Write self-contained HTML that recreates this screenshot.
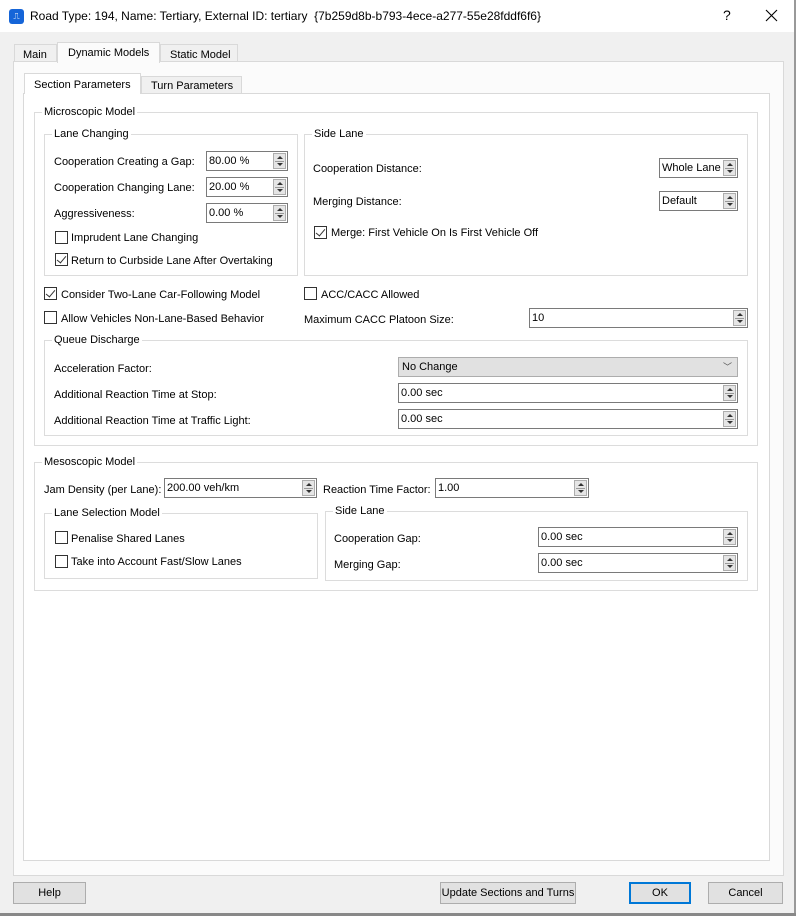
<!DOCTYPE html><html><head><style>
*{box-sizing:border-box;margin:0;padding:0}
body{width:796px;height:916px;background:#f0f0f0;font:11px "Liberation Sans",sans-serif;color:#000;position:relative;overflow:hidden}
.a{position:absolute}
.t{position:absolute;white-space:nowrap;line-height:14px}
.box{position:absolute;border:1px solid #dcdcdc}
.gt{position:absolute;top:-8px;left:7px;background:#fff;padding:0 2px;line-height:14px;white-space:nowrap}
.sp{position:absolute;border:1px solid #7a7a7a;background:#fff;height:20px;line-height:19px;padding-left:2px;white-space:nowrap}
.sp i{position:absolute;right:1px;top:1px;width:13px;height:16px;border:1px solid #adadad;background:#e5e5e5}
.sp i:before{content:"";position:absolute;left:3px;top:2px;border:3px solid transparent;border-bottom:3px solid #333;border-top:0}
.sp i:after{content:"";position:absolute;left:3px;top:9px;border:3px solid transparent;border-top:3px solid #333;border-bottom:0}
.sp i b{position:absolute;left:1px;right:1px;top:7px;height:1px;background:#999}
.cb{position:absolute;width:13px;height:13px;border:1px solid #333;background:#fff}
.cb.c:after{content:"";position:absolute;left:3px;top:0px;width:4px;height:8px;border:solid #333;border-width:0 1.3px 1.3px 0;transform:rotate(40deg)}
.btn{position:absolute;height:22px;border:1px solid #adadad;background:#e1e1e1;text-align:center;line-height:20px}
</style></head><body>
<div class="a" style="left:0;top:0;width:796px;height:32px;background:#fff"></div>
<div class="a" style="left:9px;top:9px;width:15px;height:15px;background:#1565d8;border-radius:3px;color:#fff;font-size:9px;text-align:center;line-height:14px">⎍</div>
<div class="t" style="left:30px;top:9px;font-size:12px">Road Type: 194, Name: Tertiary, External ID: tertiary &nbsp;{7b259d8b-b793-4ece-a277-55e28fddf6f6}</div>
<div class="t" style="left:723px;top:8px;font-size:14px">?</div>
<svg class="a" style="left:765px;top:9px" width="13" height="13"><path d="M1 1L12 12M12 1L1 12" stroke="#000" stroke-width="1.1"/></svg>
<div class="a" style="right:0;top:0;width:2px;height:916px;background:#999"></div>
<div class="a" style="left:14px;top:44px;width:43px;height:18px;border:1px solid #d9d9d9;background:#f0f0f0"></div><div class="t" style="left:23px;top:48px">Main</div>
<div class="a" style="left:160px;top:44px;width:78px;height:18px;border:1px solid #d9d9d9;background:#f0f0f0"></div><div class="t" style="left:170px;top:48px">Static Model</div>
<div class="a" style="left:13px;top:61px;width:771px;height:815px;border:1px solid #d9d9d9;background:#fbfbfb"></div>
<div class="a" style="left:57px;top:42px;width:103px;height:21px;border:1px solid #d9d9d9;border-bottom:0;background:#fbfbfb"></div><div class="t" style="left:68px;top:46px">Dynamic Models</div>
<div class="a" style="left:141px;top:76px;width:101px;height:18px;border:1px solid #d9d9d9;background:#f0f0f0"></div><div class="t" style="left:151px;top:79px">Turn Parameters</div>
<div class="a" style="left:23px;top:93px;width:747px;height:768px;border:1px solid #d9d9d9;background:#fff"></div>
<div class="a" style="left:24px;top:73px;width:117px;height:21px;border:1px solid #d9d9d9;border-bottom:0;background:#fff"></div><div class="t" style="left:34px;top:78px">Section Parameters</div>
<div class="box" style="left:34px;top:112px;width:724px;height:334px"><span class="gt">Microscopic Model</span></div>
<div class="box" style="left:44px;top:134px;width:254px;height:142px"><span class="gt">Lane Changing</span></div>
<div class="t" style="left:54px;top:155px">Cooperation Creating a Gap:</div><div class="sp" style="left:206px;top:151px;width:82px">80.00 %<i><b></b></i></div>
<div class="t" style="left:54px;top:181px">Cooperation Changing Lane:</div><div class="sp" style="left:206px;top:177px;width:82px">20.00 %<i><b></b></i></div>
<div class="t" style="left:54px;top:207px">Aggressiveness:</div><div class="sp" style="left:206px;top:203px;width:82px">0.00 %<i><b></b></i></div>
<div class="cb" style="left:55px;top:231px"></div><div class="t" style="left:71px;top:231px">Imprudent Lane Changing</div>
<div class="cb c" style="left:55px;top:253px"></div><div class="t" style="left:71px;top:254px">Return to Curbside Lane After Overtaking</div>
<div class="box" style="left:304px;top:134px;width:444px;height:142px"><span class="gt">Side Lane</span></div>
<div class="t" style="left:313px;top:162px">Cooperation Distance:</div><div class="sp" style="left:659px;top:158px;width:79px">Whole Lane<i><b></b></i></div>
<div class="t" style="left:313px;top:195px">Merging Distance:</div><div class="sp" style="left:659px;top:191px;width:79px">Default<i><b></b></i></div>
<div class="cb c" style="left:314px;top:226px"></div><div class="t" style="left:331px;top:226px">Merge: First Vehicle On Is First Vehicle Off</div>
<div class="cb c" style="left:44px;top:287px"></div><div class="t" style="left:61px;top:288px">Consider Two-Lane Car-Following Model</div>
<div class="cb" style="left:44px;top:311px"></div><div class="t" style="left:61px;top:312px">Allow Vehicles Non-Lane-Based Behavior</div>
<div class="cb" style="left:304px;top:287px"></div><div class="t" style="left:321px;top:288px">ACC/CACC Allowed</div>
<div class="t" style="left:304px;top:313px">Maximum CACC Platoon Size:</div><div class="sp" style="left:529px;top:308px;width:219px">10<i><b></b></i></div>
<div class="box" style="left:44px;top:340px;width:704px;height:96px"><span class="gt">Queue Discharge</span></div>
<div class="t" style="left:54px;top:362px">Acceleration Factor:</div>
<div class="a" style="left:398px;top:357px;width:340px;height:20px;background:#e1e1e1;border:1px solid #adadad;line-height:19px;padding-left:3px">No Change<span style="position:absolute;right:5px;top:0;font-size:9px;color:#555">﹀</span></div>
<div class="t" style="left:54px;top:388px">Additional Reaction Time at Stop:</div><div class="sp" style="left:398px;top:383px;width:340px">0.00 sec<i><b></b></i></div>
<div class="t" style="left:54px;top:414px">Additional Reaction Time at Traffic Light:</div><div class="sp" style="left:398px;top:409px;width:340px">0.00 sec<i><b></b></i></div>
<div class="box" style="left:34px;top:462px;width:724px;height:129px"><span class="gt">Mesoscopic Model</span></div>
<div class="t" style="left:44px;top:483px">Jam Density (per Lane):</div><div class="sp" style="left:164px;top:478px;width:153px">200.00 veh/km<i><b></b></i></div>
<div class="t" style="left:323px;top:483px">Reaction Time Factor:</div><div class="sp" style="left:435px;top:478px;width:154px">1.00<i><b></b></i></div>
<div class="box" style="left:44px;top:513px;width:274px;height:66px"><span class="gt">Lane Selection Model</span></div>
<div class="cb" style="left:55px;top:531px"></div><div class="t" style="left:71px;top:532px">Penalise Shared Lanes</div>
<div class="cb" style="left:55px;top:555px"></div><div class="t" style="left:71px;top:555px">Take into Account Fast/Slow Lanes</div>
<div class="box" style="left:325px;top:511px;width:423px;height:70px"><span class="gt">Side Lane</span></div>
<div class="t" style="left:334px;top:532px">Cooperation Gap:</div><div class="sp" style="left:538px;top:527px;width:200px">0.00 sec<i><b></b></i></div>
<div class="t" style="left:334px;top:558px">Merging Gap:</div><div class="sp" style="left:538px;top:553px;width:200px">0.00 sec<i><b></b></i></div>
<div class="btn" style="left:13px;top:882px;width:73px">Help</div>
<div class="btn" style="left:440px;top:882px;width:136px">Update Sections and Turns</div>
<div class="btn" style="left:629px;top:882px;width:62px;border:2px solid #0078d7;line-height:18px">OK</div>
<div class="btn" style="left:708px;top:882px;width:75px">Cancel</div>
<div class="a" style="left:0;top:913px;width:796px;height:3px;background:#888"></div>
</body></html>
